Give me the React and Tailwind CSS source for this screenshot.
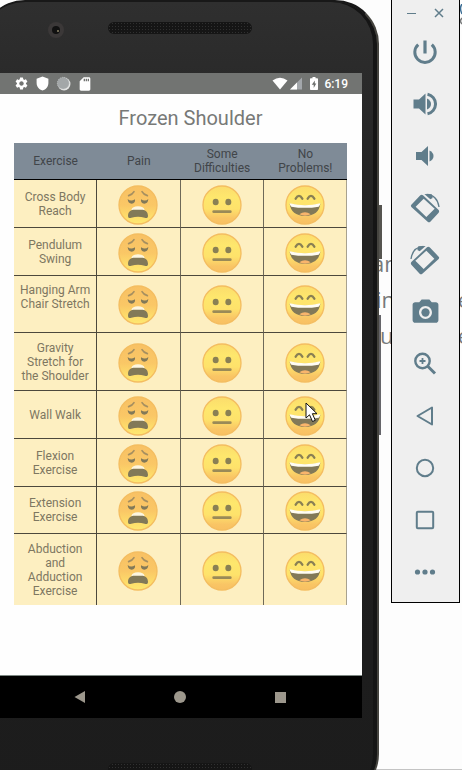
import React from 'react';
import { MdSettings, MdPhotoCamera, MdSdCard } from 'react-icons/md';

const EXERCISES = [
  { lines: ['Cross Body', 'Reach'], height: 'h-12' },
  { lines: ['Pendulum', 'Swing'], height: 'h-12' },
  { lines: ['Hanging Arm', 'Chair Stretch', '\u00a0'], height: 'h-[57px]' },
  { lines: ['Gravity', 'Stretch for', 'the Shoulder'], height: 'h-[58px]' },
  { lines: ['Wall Walk'], height: 'h-12', pointer: true },
  { lines: ['Flexion', 'Exercise'], height: 'h-12' },
  { lines: ['Extension', 'Exercise'], height: 'h-[47px]' },
  { lines: ['Abduction', 'and', 'Adduction', 'Exercise'], height: 'h-[71px]' },
];

function PainFace() {
  return (
    <svg viewBox="0 0 120 120" className="size-10" aria-hidden="true">
      <circle cx="60" cy="60" r="57" fill="url(#painFill)" stroke="#f4bd60" strokeWidth="4" />
      <g fill="none" stroke="#a68f60" strokeWidth="5" strokeLinecap="round">
        <path d="M32 32Q43 29 48 20" />
        <path d="M88 32Q77 29 72 20" />
      </g>
      <path d="M29 42Q38 51 51 43Q53 55 41 56Q30 56 29 42Z" fill="#827958" />
      <path d="M91 42Q82 51 69 43Q67 55 79 56Q90 56 91 42Z" fill="#827958" />
      <path d="M40 75Q43 64 60 64Q77 64 80 75Z" fill="#fdf6df" />
      <path d="M46 74H74C84 75 90 83 90 92C90 99 86 100 80 98Q60 93 40 98C34 100 30 99 30 92C30 83 36 75 46 74Z" fill="#827958" />
    </svg>
  );
}

function NeutralFace() {
  return (
    <svg viewBox="0 0 120 120" className="size-10" aria-hidden="true">
      <circle cx="60" cy="60" r="57" fill="url(#sunnyFill)" stroke="#f4bd60" strokeWidth="4" />
      <ellipse cx="41" cy="51" rx="9" ry="10" fill="#8a8054" />
      <ellipse cx="79" cy="51" rx="9" ry="10" fill="#8a8054" />
      <rect x="31" y="76" width="58" height="8" rx="4" fill="#9a8a57" />
    </svg>
  );
}

function HappyFace() {
  return (
    <svg viewBox="0 0 120 120" className="size-10" aria-hidden="true">
      <circle cx="60" cy="60" r="57" fill="url(#sunnyFill)" stroke="#f4bd60" strokeWidth="4" />
      <g fill="none" stroke="#8a8054" strokeWidth="7" strokeLinecap="round">
        <path d="M32 41Q42 24 52 41" />
        <path d="M68 41Q78 24 88 41" />
      </g>
      <path d="M14 56Q60 68 106 56Q102 91 60 93Q18 91 14 56Z" fill="#827958" />
      <path d="M14 55Q60 67 106 55Q106 61 101 65Q60 72 19 65Q14 61 14 55Z" fill="#fffdf3" />
      <path d="M43 88Q60 76 77 88Q60 96 43 88Z" fill="#f9b56c" />
    </svg>
  );
}

const RATINGS = [
  { label: 'Pain', Face: PainFace },
  { label: 'Some Difficulties', Face: NeutralFace },
  { label: 'No Problems!', Face: HappyFace },
];

function MousePointer() {
  return (
    <svg viewBox="0 0 14 21" className="pointer-events-none absolute top-1.5 left-5 h-[21px] w-3.5" aria-hidden="true">
      <path d="M1 1V16L4.500 12.800L7.500 19.500L10.300 18.300L7.400 11.700H12Z" fill="#fff" stroke="#111" strokeWidth="1" />
    </svg>
  );
}

function ExerciseTable() {
  const head = 'border-b border-black p-0 text-center align-middle font-normal';
  return (
    <table className="w-full table-fixed border-separate border-spacing-0 text-[12px] leading-[14px]">
      <thead>
        <tr className="h-[37px] bg-[#7f8b97] text-[#414549]">
          <th scope="col" className={head}>Exercise</th>
          <th scope="col" className={head}>Pain</th>
          <th scope="col" className={head}>Some<br />Difficulties</th>
          <th scope="col" className={head}>No<br />Problems!</th>
        </tr>
      </thead>
      <tbody>
        {EXERCISES.map((row) => (
          <tr key={row.lines.join(' ')} className={`group bg-[#fdefc1] ${row.height}`}>
            <th scope="row" className="border-r border-b border-[#4c483c] p-0 text-center align-middle font-normal text-[#7e7761] group-last:border-b-0">
              {row.lines.map((line) => (
                <span key={line} className="block whitespace-nowrap">{line}</span>
              ))}
            </th>
            {RATINGS.map(({ label, Face }, i) => (
              <td key={label} className="border-r border-b border-r-[#6e6958] border-b-[#4c483c] p-0 align-middle last:border-r-[#a8a28f] group-last:border-b-0">
                <button type="button" aria-label={`${row.lines.join(' ').trim()}: ${label}`} className="relative mx-auto mt-0.5 block size-10">
                  <Face />
                  {row.pointer && i === 2 && <MousePointer />}
                </button>
              </td>
            ))}
          </tr>
        ))}
      </tbody>
    </table>
  );
}

function StatusBar() {
  return (
    <div className="flex h-[21px] items-center justify-between bg-[#727472] pr-3.5 pl-3.5 text-white">
      <div className="flex items-center gap-1.5">
        <MdSettings className="size-[15px]" />
        <svg viewBox="0 0 14 14" className="size-[15px]" aria-hidden="true">
          <path d="M7 0.500L12.500 2.500V6.500C12.500 10 10.200 12.500 7 13.500C3.800 12.500 1.500 10 1.500 6.500V2.500Z" fill="currentColor" />
        </svg>
        <svg viewBox="0 0 14 14" className="size-[15px]" aria-hidden="true">
          <circle cx="7.500" cy="7.500" r="6" fill="#e4e5e4" />
          <circle cx="6.700" cy="6.700" r="5.500" fill="#a3a7a8" stroke="#c3c6c6" strokeWidth="0.600" strokeDasharray="1 1" />
        </svg>
        <MdSdCard className="size-4" />
      </div>
      <div className="flex items-center">
        <svg viewBox="0 0 16 13" className="h-[13px] w-4" aria-hidden="true">
          <path d="M0.500 3.500Q8 -2 15.500 3.500L8 12.500Z" fill="currentColor" />
        </svg>
        <svg viewBox="0 0 14 13" className="ml-px h-[13px] w-3.5" aria-hidden="true">
          <path d="M13 0.500V12.500H1Z" fill="#a3a7ab" />
          <path d="M8 5.500V12.500H1Z" fill="currentColor" />
        </svg>
        <svg viewBox="0 0 8 13" className="mr-1.5 ml-[7px] h-[13px] w-2" aria-hidden="true">
          <path d="M2.500 0H5.500V1.300H7.200Q8 1.300 8 2.100V12.200Q8 13 7.200 13H0.800Q0 13 0 12.200V2.100Q0 1.300 0.800 1.300H2.500Z" fill="currentColor" />
          <path d="M4.800 3.500L1.800 7.700H3.700V11L6.300 6.600H4.800Z" fill="#6b6d6b" />
        </svg>
        <time className="text-[12px] leading-5 font-medium">6:19</time>
      </div>
    </div>
  );
}

function NavBar() {
  const button = 'flex h-full w-[100px] items-center justify-center';
  return (
    <nav className="flex h-[43px] justify-center border-t border-[#7c8782] bg-black pr-0.5 text-[#9c978c]">
      <button type="button" aria-label="Back" className={button}>
        <svg viewBox="0 0 12 12" className="size-3"><path d="M0.500 6L11 0V12Z" fill="currentColor" /></svg>
      </button>
      <button type="button" aria-label="Home" className={button}>
        <span className="size-3 rounded-full bg-current" />
      </button>
      <button type="button" aria-label="Overview" className={button}>
        <span className="size-[11px] bg-current" />
      </button>
    </nav>
  );
}

function Speaker() {
  return (
    <svg className="h-3 w-36 rounded-full bg-[#151515]" aria-hidden="true">
      <rect width="100%" height="100%" fill="url(#speakerDots)" />
    </svg>
  );
}

function Phone() {
  return (
    <div className="relative -mb-7 -ml-[19px] flex min-w-0 flex-1 flex-col rounded-[44px] border-t-2 border-r-2 border-t-[#181818] border-r-[#45443f] bg-[#1e1e1e] bg-linear-to-b from-[#2f2f2f] via-[#202020] via-30% to-[#1c1c1c] pr-[15px] pl-[19px] shadow-[inset_-4px_0_0_#151515]">
      <div className="absolute top-[203px] left-full ml-0.5 h-[54px] w-[3px] bg-[#55544f]" />
      <div className="absolute top-[313px] left-full ml-0.5 h-[120px] w-0.5 bg-[#65656a]" />
      <div className="relative flex h-[71px] shrink-0 justify-center pt-5 pr-0.5">
        <span className="absolute top-5 left-12 flex size-4 items-center justify-center rounded-full bg-[#3b3838]">
          <span className="size-2 rounded-full bg-[#111]" />
          <span className="absolute top-2 left-[9px] size-0.5 rounded-full bg-[#8c8468]" />
        </span>
        <Speaker />
      </div>
      <div className="flex min-h-0 flex-1 flex-col bg-white">
        <StatusBar />
        <main className="min-h-0 flex-1 bg-[#fefefe] pr-[15px] pl-3.5">
          <h1 className="pt-2.5 pb-[11px] pl-5 text-center text-[20px] leading-7 text-[#777977]">Frozen Shoulder</h1>
          <ExerciseTable />
        </main>
        <NavBar />
      </div>
      <div className="flex h-20 shrink-0 justify-center pt-[45px] pr-0.5">
        <Speaker />
      </div>
    </div>
  );
}

function RotateIcon({ mirrored }) {
  return (
    <svg viewBox="0 0 90 90" className="size-[30px]" aria-hidden="true">
      <g transform={mirrored ? 'translate(90 0) scale(-1 1)' : undefined}>
        <path
          fillRule="evenodd"
          fill="currentColor"
          d="M4 35L31 7Q35 4 39 7L86 51Q89 55 86 59L61 86Q57 89 53 86L4 42Q1 38 4 35ZM17 41L49 72L74 47L41 17Z"
        />
        <path d="M50 4Q82 6 87 42" fill="none" stroke="currentColor" strokeWidth="4" />
        <path d="M43 3L65 4L68 15L61 19Z" fill="currentColor" />
      </g>
    </svg>
  );
}

function VolumeIcon({ loud }) {
  return (
    <svg viewBox="0 0 24 24" className="size-6" fill="none" aria-hidden="true">
      {loud ? (
        <>
          <path d="M0.500 7.500H6L12.500 1.500V22.500L6 16.500H0.500Z" fill="currentColor" />
          <path d="M14 6.500Q18 8.500 18 12T14 17.500Z" fill="currentColor" />
          <path d="M14.500 2.200A10 10 0 0 1 14.500 21.800" stroke="currentColor" strokeWidth="3" />
        </>
      ) : (
        <>
          <path d="M3 8H8.500L15 2V22L8.500 16H3Z" fill="currentColor" />
          <path d="M16.500 6.500Q20.500 8.500 20.500 12T16.500 17.500Z" fill="currentColor" />
        </>
      )}
    </svg>
  );
}

function LineIcon({ children }) {
  return (
    <svg viewBox="0 0 24 24" className="size-6" fill="none" stroke="currentColor" strokeWidth="2" strokeLinejoin="round" aria-hidden="true">
      {children}
    </svg>
  );
}

const TOOLS = [
  {
    label: 'Power',
    icon: (
      <LineIcon>
        <path d="M12 0.500V13.500" strokeWidth="3.200" />
        <path d="M5.200 4.600A10.200 10.200 0 1 0 18.800 4.600" strokeWidth="3" />
      </LineIcon>
    ),
  },
  { label: 'Volume up', icon: <VolumeIcon loud /> },
  { label: 'Volume down', icon: <VolumeIcon /> },
  { label: 'Rotate left', icon: <RotateIcon /> },
  { label: 'Rotate right', icon: <RotateIcon mirrored /> },
  { label: 'Take screenshot', icon: <MdPhotoCamera className="size-[31px]" /> },
  {
    label: 'Zoom',
    icon: (
      <LineIcon>
        <circle cx="9.500" cy="9" r="7.200" strokeWidth="2.400" />
        <path d="M9.500 6V12M6.500 9H12.500" strokeWidth="1.800" />
        <path d="M14.500 14L22 21.500" strokeWidth="3" />
      </LineIcon>
    ),
  },
  { label: 'Back', icon: <LineIcon><path d="M4.500 12L19 3.500V20.500Z" /></LineIcon> },
  { label: 'Home', icon: <LineIcon><circle cx="12" cy="12" r="8.200" /></LineIcon> },
  { label: 'Overview', icon: <LineIcon><rect x="3.800" y="3.800" width="16.400" height="16.400" rx="1" /></LineIcon> },
  {
    label: 'More',
    icon: (
      <svg viewBox="0 0 24 24" className="size-6" fill="currentColor" aria-hidden="true">
        <circle cx="4.500" cy="12" r="2.600" />
        <circle cx="12" cy="12" r="2.600" />
        <circle cx="19.500" cy="12" r="2.600" />
      </svg>
    ),
  },
];

function EmulatorToolbar() {
  return (
    <aside className="relative mr-0.5 ml-3 w-[69px] shrink-0 self-start border-x border-b border-black bg-[#efefef] pr-px pb-1 text-[#607d8b]">
      <div className="flex h-[26px] justify-center gap-3">
        <button type="button" aria-label="Minimize" className="flex w-4 items-center justify-center">
          <span className="h-px w-[9px] bg-current" />
        </button>
        <button type="button" aria-label="Close" className="flex w-4 items-center justify-center">
          <svg viewBox="0 0 10 10" className="size-2.5"><path d="M1 1L9 9M9 1L1 9" stroke="currentColor" strokeWidth="1.500" /></svg>
        </button>
      </div>
      {TOOLS.map((tool) => (
        <button key={tool.label} type="button" aria-label={tool.label} className="flex h-[52px] w-full items-center justify-center">
          {tool.icon}
        </button>
      ))}
    </aside>
  );
}

/* Page lying behind the emulator windows; only slivers of it show. */
function BackgroundPage() {
  return (
    <div className="absolute inset-0 border-b border-[#c4c4c4] font-['Open_Sans',sans-serif] text-[22px] leading-9 text-[#77797a]" aria-hidden="true">
      <svg viewBox="0 0 3 24" className="absolute top-1 right-0 h-6 w-[3px]" fill="none">
        <path d="M3 0Q0 4 3 10" stroke="#3d6f96" strokeWidth="1.500" />
        <path d="M3 14Q0 17 3 20" stroke="#77797a" strokeWidth="1.500" />
      </svg>
      <div className="absolute top-[245px] right-0 w-[90px]">
        <p>an</p>
        <p className="flex justify-between pl-1"><span>in</span><span className="-mr-2">e</span></p>
        <p className="flex justify-between pl-2"><span>u</span><span className="-mr-2">e</span></p>
      </div>
    </div>
  );
}

export default function App() {
  return (
    <div className="relative flex h-screen overflow-hidden bg-[#fdfdfd] font-[Roboto,sans-serif]">
      <svg className="absolute size-0" aria-hidden="true">
        <defs>
          <linearGradient id="painFill" x1="0" y1="0" x2="0" y2="1">
            <stop offset="0" stopColor="#f8c164" />
            <stop offset="0.500" stopColor="#fac766" />
            <stop offset="0.850" stopColor="#fee06b" />
            <stop offset="1" stopColor="#fde873" />
          </linearGradient>
          <linearGradient id="sunnyFill" x1="0" y1="0" x2="0" y2="1">
            <stop offset="0" stopColor="#fbdc6c" />
            <stop offset="0.300" stopColor="#fee76d" />
            <stop offset="0.600" stopColor="#fee26b" />
            <stop offset="0.850" stopColor="#f9c565" />
            <stop offset="1" stopColor="#f8c062" />
          </linearGradient>
          <pattern id="speakerDots" width="3" height="3" patternUnits="userSpaceOnUse">
            <rect x="1" y="1" width="1" height="1" fill="#303030" />
          </pattern>
        </defs>
      </svg>
      <BackgroundPage />
      <Phone />
      <EmulatorToolbar />
    </div>
  );
}
